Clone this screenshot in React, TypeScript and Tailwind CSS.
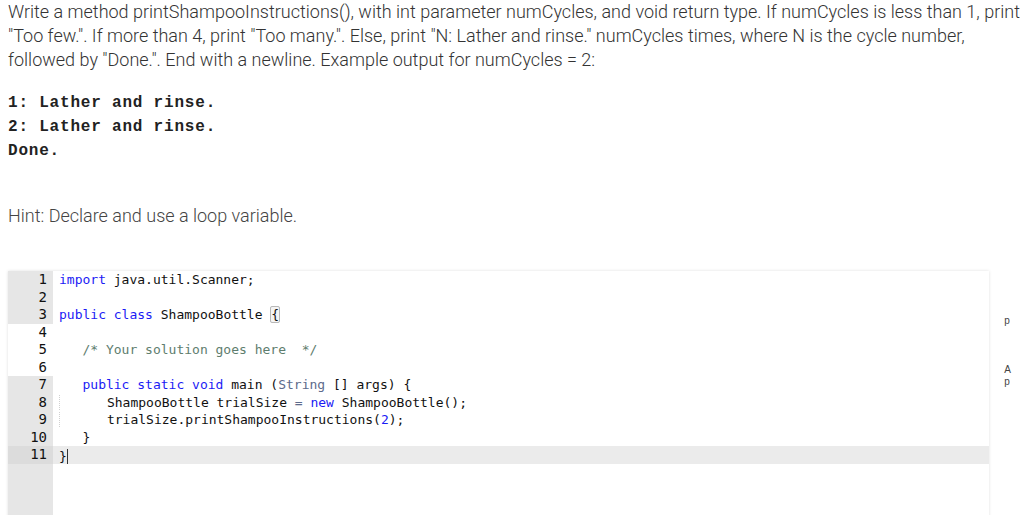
import React from "react";

const KW = "text-[#1b1bf5]";
const CM = "text-[#5e7d6e]";
const TY = "text-[#5d6b8c]";

type Line = { n: number; gutter: "gray" | "white" | "active"; code: React.ReactNode };

const lines: Line[] = [
  { n: 1, gutter: "gray", code: <><span className={KW}>import</span> java.util.Scanner;</> },
  { n: 2, gutter: "gray", code: "" },
  {
    n: 3,
    gutter: "gray",
    code: (
      <>
        <span className={KW}>public</span> <span className={KW}>class</span> ShampooBottle{" "}
        <span className="rounded-[2px] border border-[#b8b8b8] bg-[#f4f4f4]">{"{"}</span>
      </>
    ),
  },
  { n: 4, gutter: "white", code: "" },
  { n: 5, gutter: "white", code: <span className={CM}>{"   /* Your solution goes here  */"}</span> },
  { n: 6, gutter: "white", code: "" },
  {
    n: 7,
    gutter: "gray",
    code: (
      <>
        {"   "}
        <span className={KW}>public</span> <span className={KW}>static</span> <span className={KW}>void</span> main (
        <span className={TY}>String</span> [] args) {"{"}
      </>
    ),
  },
  {
    n: 8,
    gutter: "gray",
    code: (
      <>
        <span className="border-l border-dotted border-[#d0d0d0]">{"   "}</span>
        {"   ShampooBottle trialSize "}
        <span className={TY}>=</span> <span className={KW}>new</span> ShampooBottle();
      </>
    ),
  },
  {
    n: 9,
    gutter: "gray",
    code: (
      <>
        <span className="border-l border-dotted border-[#d0d0d0]">{"   "}</span>
        {"   trialSize.printShampooInstructions("}
        <span className={KW}>2</span>);
      </>
    ),
  },
  { n: 10, gutter: "gray", code: "   }" },
  {
    n: 11,
    gutter: "active",
    code: (
      <>
        {"}"}
        <span className="inline-block h-[15px] w-px translate-y-[3px] bg-[#333]" />
      </>
    ),
  },
];

function CodeEditor() {
  return (
    <div className="flex min-h-[300px] w-[991px] bg-white shadow-[0_0_3px_rgba(0,0,0,0.13)]">
      <div className="w-full font-['DejaVu_Sans_Mono',monospace] text-[13px] leading-[17.5px] text-[#111]">
        {lines.map((l) => (
          <div key={l.n} className={`flex h-[17.5px] ${l.gutter === "active" ? "bg-[#ebebeb]" : ""}`}>
            <div
              className={`w-[45px] shrink-0 pr-[6px] text-right text-[14px] ${
                l.gutter === "gray" ? "bg-[#e6e6e6]" : l.gutter === "active" ? "bg-[#dcdcdc]" : "bg-white"
              }`}
            >
              {l.n}
            </div>
            <div className="whitespace-pre pl-[6px]">{l.code}</div>
          </div>
        ))}
        <div className="h-[300px] w-[45px] bg-[#e6e6e6]" />
      </div>
    </div>
  );
}

export default function App() {
  return (
    <div className="h-[515px] overflow-hidden bg-white pl-2">
      {/* Problem statement */}
      <p className="whitespace-nowrap font-['Roboto',sans-serif] text-[18px] font-light leading-[24px] text-[#333]">
        Write a method printShampooInstructions(), with int parameter numCycles, and void return type. If numCycles is less than 1, print
        <br />
        "Too few.". If more than 4, print "Too many.". Else, print "N: Lather and rinse." numCycles times, where N is the cycle number,
        <br />
        followed by "Done.". End with a newline. Example output for numCycles = 2:
      </p>

      {/* Example output */}
      <pre className="mt-[19px] font-['Liberation_Mono',monospace] text-[16px] font-semibold leading-[24px] tracking-[0.8px] text-[#222]">
        {"1: Lather and rinse.\n2: Lather and rinse.\nDone."}
      </pre>

      <p className="mt-[41px] font-['Roboto',sans-serif] text-[18px] font-light leading-[24px] text-[#444]">
        Hint: Declare and use a loop variable.
      </p>

      <div className="mt-[43px] flex gap-[15px]">
        <CodeEditor />
        <div className="w-[20px] font-['Liberation_Sans',sans-serif] text-[10px] leading-[12px] text-[#444]">
          <div className="mt-[44px]">p</div>
          <div className="mt-[37px]">A</div>
          <div>p</div>
        </div>
      </div>
    </div>
  );
}
